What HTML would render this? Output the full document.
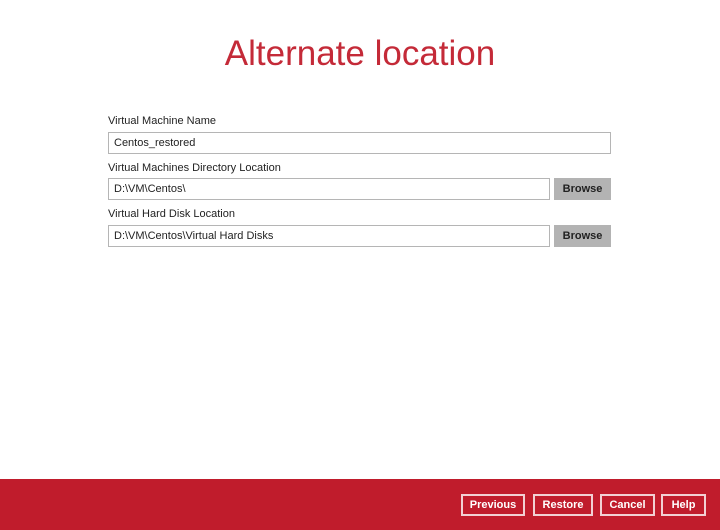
<!DOCTYPE html><html><head><style>
body{margin:0;width:720px;height:530px;background:#fff;font-family:"Liberation Sans",sans-serif;position:relative;overflow:hidden}
.t{position:absolute;left:0;width:720px;top:34px;text-align:center;font-size:35px;color:#c42a38;font-weight:300}
.l{position:absolute;left:108px;font-size:11px;color:#222}
.i{position:absolute;left:108px;border:1px solid #b5b5b5;box-sizing:border-box;font-size:11px;color:#222;padding-left:5px;background:#fff}
.b{position:absolute;left:554px;width:57px;height:22px;background:#b3b3b3;font-size:11px;font-weight:bold;color:#222;text-align:center;line-height:22px}
.f{position:absolute;left:0;top:479px;width:720px;height:51px;background:#c01c2c}
.fb{position:absolute;top:494px;height:22px;border:2px solid #f2d0d4;box-sizing:border-box;color:#fff;font-size:11px;font-weight:bold;text-align:center;line-height:18px}
</style></head><body>
<div class="t">Alternate location</div>
<div class="l" style="top:115px">Virtual Machine Name</div>
<div class="i" style="top:132px;width:503px;height:22px;line-height:20px">Centos_restored</div>
<div class="l" style="top:162px">Virtual Machines Directory Location</div>
<div class="i" style="top:178px;width:442px;height:22px;line-height:20px">D:\VM\Centos\</div>
<div class="b" style="top:178px">Browse</div>
<div class="l" style="top:208px">Virtual Hard Disk Location</div>
<div class="i" style="top:225px;width:442px;height:22px;line-height:20px">D:\VM\Centos\Virtual Hard Disks</div>
<div class="b" style="top:225px">Browse</div>
<div class="f"></div>
<div class="fb" style="left:461px;width:64px">Previous</div>
<div class="fb" style="left:533px;width:60px">Restore</div>
<div class="fb" style="left:600px;width:55px">Cancel</div>
<div class="fb" style="left:661px;width:45px">Help</div>
</body></html>
